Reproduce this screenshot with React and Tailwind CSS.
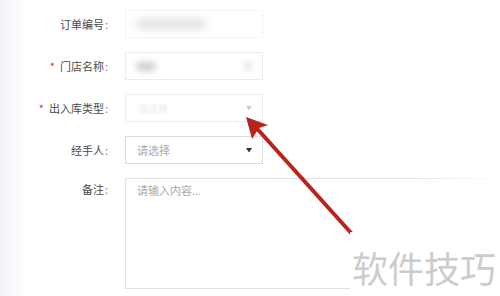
import React from 'react';

const font = { fontFamily: '"Noto Sans CJK SC", "Noto Sans", sans-serif' };

const Label = ({ required, children }) => (
    <div className="w-[110px] shrink-0 flex justify-end items-center pr-[2px] text-[11px] text-[#4a4a4a]">
        {required && <span className="text-[#e0303c] mr-[5px]">*</span>}
        <span>{children}</span>
        <span className="ml-[1px] text-[#888]">:</span>
    </div>
);

const Caret = ({ color }) => (
    <svg width="6" height="5" viewBox="0 0 6 5" className="shrink-0">
        <path d="M0 0 L6 0 L3 4.5 Z" fill={color} />
    </svg>
);

const App = () => {
    return (
        <div className="relative w-[500px] h-[296px] overflow-hidden bg-white" style={font}>
            {/* faint left gutter */}
            <div className="absolute left-0 top-0 bottom-0 w-[28px] bg-gradient-to-r from-[#f3f4f7] to-white" />

            <div className="relative flex flex-col gap-[14px] pt-[10px]">
                {/* 订单编号 */}
                <div className="flex items-center gap-[15px] h-[28px]">
                    <Label>订单编号</Label>
                    <div className="w-[138px] h-full border border-[#f4f4f4] flex items-center px-[10px]">
                        <div className="w-[70px] h-[8px] bg-[#dcdcdc] rounded-full blur-[4px]" />
                    </div>
                </div>

                {/* 门店名称 */}
                <div className="flex items-center gap-[15px] h-[28px]">
                    <Label required>门店名称</Label>
                    <div className="w-[138px] h-full border border-[#ececec] flex items-center justify-between px-[10px]">
                        <div className="w-[20px] h-[9px] bg-[#cfcfcf] rounded-full blur-[3px]" />
                        <div className="w-[8px] h-[8px] bg-[#e0e0e0] rounded-full blur-[3px]" />
                    </div>
                </div>

                {/* 出入库类型 */}
                <div className="flex items-center gap-[15px] h-[28px]">
                    <Label required>出入库类型</Label>
                    <div className="w-[138px] h-full border border-[#ececec] flex items-center justify-between pl-[12px] pr-[10px]">
                        <span className="text-[10px] text-[#e8e8e8] blur-[1px]">请选择</span>
                        <Caret color="#d0d0d0" />
                    </div>
                </div>

                {/* 经手人 */}
                <div className="flex items-center gap-[15px] h-[28px]">
                    <Label>经手人</Label>
                    <div className="w-[138px] h-full border border-[#dcdcdc] flex items-center justify-between pl-[11px] pr-[10px]">
                        <span className="text-[11px] text-[#aaa]">请选择</span>
                        <Caret color="#333" />
                    </div>
                </div>

                {/* 备注 */}
                <div className="flex items-start gap-[15px]">
                    <div className="h-[22px] flex">
                        <Label>备注</Label>
                    </div>
                    <div className="w-[420px] shrink-0 h-[111px] border border-[#e2e2e2] pl-[11px] leading-[18px]">
                        <span className="text-[11px] text-[#aaa]">请输入内容...</span>
                    </div>
                </div>
            </div>

            {/* fade of the textarea edge on the right */}
            <div className="absolute right-0 top-[170px] w-[90px] h-[70px] bg-gradient-to-r from-transparent to-white" />

            {/* red arrow */}
            <svg className="absolute left-0 top-0" width="500" height="296" viewBox="0 0 500 296">
                <line x1="352" y1="234" x2="252" y2="123" stroke="#b8241c" strokeWidth="4" />
                <path d="M246 117 L268 125 L259 128 L252 139 Z" fill="#b8241c" />
            </svg>

            {/* watermark */}
            <div className="absolute right-0 bottom-0 w-[150px] h-[64px] bg-white flex items-end justify-end pr-[4px] pb-[11px]">
                <span className="text-[36px] leading-none text-[#cccccc]">软件技巧</span>
            </div>
        </div>
    );
};

export default App;
